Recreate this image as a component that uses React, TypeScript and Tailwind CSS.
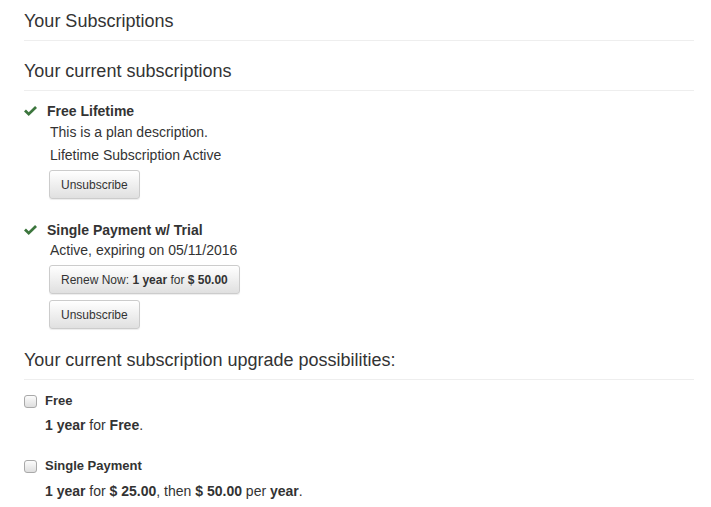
import React from 'react'

// Subscriptions page — current plans + upgrade options

function Check() {
  return (
    <svg viewBox="0 0 14 12" className="h-[12px] w-[13px] shrink-0 fill-[#3c763d]">
      <path d="M0 6.6 L2.1 4.5 L5.1 7.3 L11.9 0.6 L14 2.7 L5.1 11.4 Z" />
    </svg>
  )
}

function Btn({ children }: { children: React.ReactNode }) {
  return (
    <button className="flex h-[29px] items-center rounded-[3px] border border-[#ccc] bg-gradient-to-b from-white to-[#e0e0e0] px-[11px] text-[12px] text-[#333] shadow-[inset_0_1px_0_rgba(255,255,255,0.15),0_1px_1px_rgba(0,0,0,0.075)]">
      {children}
    </button>
  )
}

function Heading({ children, className = '' }: { children: React.ReactNode; className?: string }) {
  return (
    <div className={'border-b border-[#eee] pb-[9px] text-[18px] leading-[20px] text-[#333] ' + className}>
      {children}
    </div>
  )
}

function Box() {
  return <span className="inline-block h-[13px] w-[13px] shrink-0 rounded-[3px] border border-[#a9a9a9] bg-gradient-to-b from-[#fcfcfc] to-[#dedede]" />
}

export default function App() {
  return (
    <div className="min-h-screen bg-white px-[24px] font-['Liberation_Sans',Arial,sans-serif] text-[14px] text-[#333]" style={{ width: 718 }}>
      <div className="w-[670px]">
        <Heading className="pt-[11px]">Your Subscriptions</Heading>
        <Heading className="pt-[20px]">Your current subscriptions</Heading>

        <div className="pt-[10px]">
          <div className="flex items-center gap-[10px] leading-[20px]">
            <Check />
            <span className="text-[14px] font-bold">Free Lifetime</span>
          </div>
          <div className="pl-[26px]">
            <div className="mt-[1px] leading-[20px]">This is a plan description.</div>
            <div className="mt-[3px] leading-[20px]">Lifetime Subscription Active</div>
            <div className="-ml-[1px] mt-[5px]">
              <Btn>Unsubscribe</Btn>
            </div>
          </div>
        </div>

        <div className="pt-[21px]">
          <div className="flex items-center gap-[10px] leading-[20px]">
            <Check />
            <span className="text-[14px] font-bold">Single Payment w/ Trial</span>
          </div>
          <div className="pl-[26px]">
            <div className="leading-[20px]">Active, expiring on 05/11/2016</div>
            <div className="-ml-[1px] mt-[5px] flex flex-col items-start gap-[6px]">
              <Btn>
                Renew Now:&nbsp;<b>1 year</b>&nbsp;for&nbsp;<b>$ 50.00</b>
              </Btn>
              <Btn>Unsubscribe</Btn>
            </div>
          </div>
        </div>

        <Heading className="mt-[20px] pt-[1px]">Your current subscription upgrade possibilities:</Heading>

        <div className="pt-[11px] text-[14px]">
          <div className="flex items-center gap-[8px] leading-[20px]">
            <Box />
            <span className="text-[13px] font-bold">Free</span>
          </div>
          <div className="mt-[4px] pl-[21px] leading-[20px]">
            <b>1 year</b> for <b>Free</b>.
          </div>

          <div className="mt-[21px] flex items-center gap-[8px] leading-[20px]">
            <Box />
            <span className="text-[13px] font-bold">Single Payment</span>
          </div>
          <div className="mt-[5px] pl-[21px] leading-[20px]">
            <b>1 year</b> for <b>$ 25.00</b>, then <b>$ 50.00</b> per <b>year</b>.
          </div>
        </div>
      </div>
    </div>
  )
}
